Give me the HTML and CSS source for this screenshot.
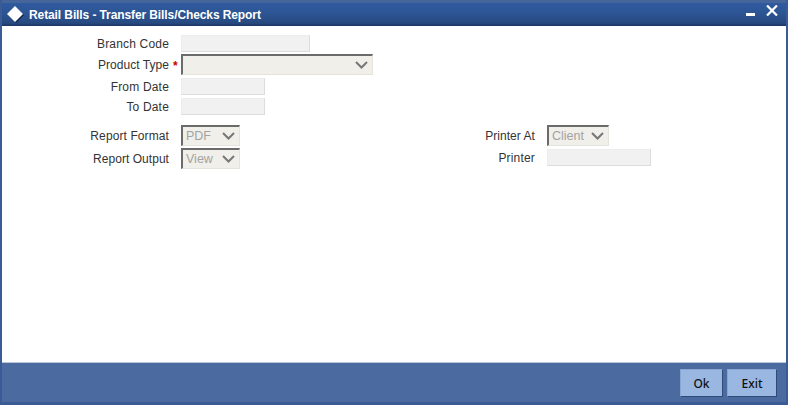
FILE: index.html
```html
<!DOCTYPE html>
<html lang="en">
<head>
<meta charset="utf-8">
<title>Retail Bills - Transfer Bills/Checks Report</title>
<link rel="stylesheet" href="styles.css">
</head>
<body>
<div class="window">
  <header class="titlebar">
    <svg class="logo" width="20" height="20" viewBox="0 0 20 20"><path d="M9.5 3 L18 11 L10 19 L2 11 Z" fill="#10254d"/><path d="M9 2 L17 10 L9 18 L1 10 Z" fill="#fff"/></svg>
    <span class="title">Retail Bills - Transfer Bills/Checks Report</span>
    <svg class="win-min" width="9" height="3" viewBox="0 0 9 3"><rect width="9" height="3" fill="#fff"/></svg>
    <svg class="win-close" width="12" height="11" viewBox="0 0 12 11"><path d="M1 0.5 L11 10.5 M11 0.5 L1 10.5" stroke="#fff" stroke-width="2.2" fill="none"/></svg>
  </header>
  <main class="content">
    <section class="block-top">
      <div class="row row-branch"><label class="lbl">Branch Code</label><div class="input w-branch"></div></div>
      <div class="row row-product"><label class="lbl lbl-tight">Product Type<b class="req">*</b></label>
        <div class="select w-product"><span class="val"></span><svg class="chev" width="13" height="8" viewBox="0 0 13 8"><path d="M1 1 L6.5 6.5 L12 1" stroke="#777" stroke-width="2" fill="none"/></svg></div></div>
      <div class="row row-from"><label class="lbl">From Date</label><div class="input w-date"></div></div>
      <div class="row row-to"><label class="lbl">To Date</label><div class="input w-date"></div></div>
    </section>
    <section class="block-bottom">
      <div class="col col-left">
        <div class="row"><label class="lbl lbl-mid">Report Format</label>
          <div class="select w-fmt"><span class="val">PDF</span><svg class="chev" width="13" height="8" viewBox="0 0 13 8"><path d="M1 1 L6.5 6.5 L12 1" stroke="#777" stroke-width="2" fill="none"/></svg></div></div>
        <div class="row row-gap2"><label class="lbl lbl-tight">Report Output</label>
          <div class="select w-fmt"><span class="val">View</span><svg class="chev" width="13" height="8" viewBox="0 0 13 8"><path d="M1 1 L6.5 6.5 L12 1" stroke="#777" stroke-width="2" fill="none"/></svg></div></div>
      </div>
      <div class="col col-right">
        <div class="row"><label class="lbl lbl-tight">Printer At</label>
          <div class="select w-client"><span class="val">Client</span><svg class="chev" width="13" height="8" viewBox="0 0 13 8"><path d="M1 1 L6.5 6.5 L12 1" stroke="#777" stroke-width="2" fill="none"/></svg></div></div>
        <div class="row row-gap3"><label class="lbl">Printer</label><div class="input w-printer"></div></div>
      </div>
    </section>
  </main>
  <footer class="footer">
    <button class="btn">Ok</button>
    <button class="btn btn-exit">Exit</button>
  </footer>
</div>
</body>
</html>
```
FILE: styles.css
```css
* { box-sizing: border-box; }
html, body { margin: 0; padding: 0; }
body { width: 788px; height: 405px; overflow: hidden; font-family: "Liberation Sans", Arial, sans-serif; font-size: 12px; color: #333; }
.window { width: 788px; height: 405px; display: flex; flex-direction: column; background: #3a5b95; padding: 0 2px 3px 2px; }
.titlebar { height: 26px; padding-left: 4px; display: flex; align-items: center; background: linear-gradient(#2f5a9e 0, #2d5696 40%, #27497f 88%, #1a3462 100%); border-top: 3px solid #46669b; }
.logo { flex: none; margin-top: -1px; }
.title { margin-left: 3px; font-size: 12px; font-weight: bold; letter-spacing: -0.1px; color: #fff; }
.win-min { margin-left: auto; }
.win-close { margin: -9px 8px 0 11px; }
.content { height: 337px; flex: none; background: #fff; padding-top: 9px; border-bottom: 1px solid #b9c6dc; }
.row { display: flex; align-items: center; }
.lbl { width: 167px; text-align: right; color: #333; flex: none; position: relative; letter-spacing: 0.18px; }
.lbl-mid { letter-spacing: 0.1px; }
.lbl-tight { letter-spacing: 0.04px; }
.req { position: absolute; left: 171px; top: 1px; color: #c00; font-weight: bold; }
.input { height: 17px; margin-left: 12px; background: #f1f1f1; border: 1px solid #ececec; border-bottom-color: #dcdcdc; border-right-color: #dcdcdc; }
.select { height: 21px; margin-left: 12px; display: flex; align-items: center; justify-content: space-between; background: #f0efea; border-top: 2px solid #6b6b6b; border-left: 2px solid #6b6b6b; border-right: 1px solid #e4e3de; border-bottom: 1px solid #e4e3de; padding: 0 1px 0 3px; color: #a3a3a3; font-size: 12.5px; }
.chev { flex: none; margin-right: 3px; }
.w-branch { width: 129px; }
.w-product { width: 192px; }
.w-date { width: 84px; }
.w-fmt { width: 59px; }
.w-client { width: 62px; }
.w-printer { width: 104px; }
.row-product { margin-top: 2px; }
.row-from { margin-top: 3px; }
.row-to { margin-top: 3px; }
.block-bottom { display: flex; margin-top: 10px; }
.col-left { width: 366px; }
.row-gap2 { margin-top: 2px; }
.row-gap3 { margin-top: 3px; }
.footer { flex: 1; display: flex; justify-content: flex-end; align-items: flex-start; gap: 4px; padding: 6px 9px 0 0; background: #4b6a9f; }
.btn { width: 43px; height: 28px; padding: 0; font: 500 12px "Noto Sans", "Liberation Sans", sans-serif; color: #111; background: #99b7e0; border: 1px solid #88a6d0; border-right-color: #2f4a78; border-bottom-color: #2f4a78; }
.btn-exit { width: 50px; }
```
